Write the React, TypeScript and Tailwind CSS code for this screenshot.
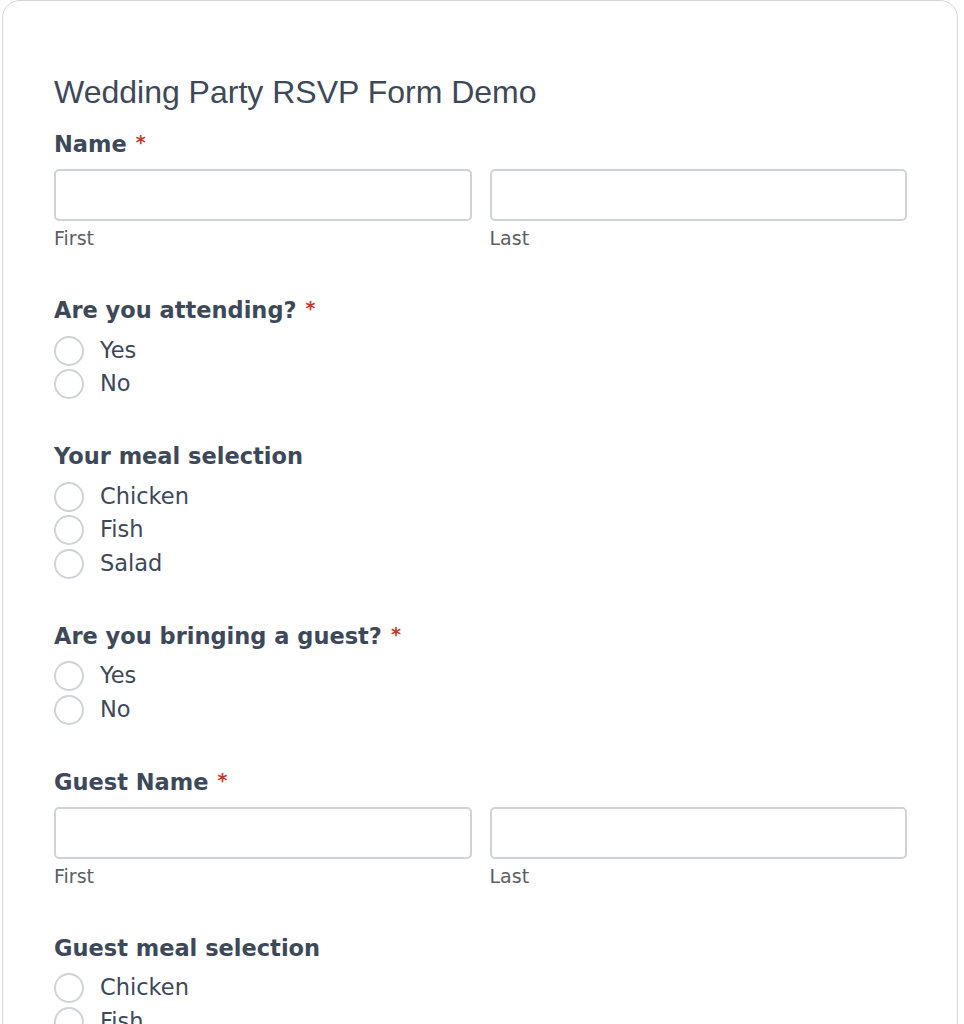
const labelFont = { fontFamily: '"DejaVu Sans", Verdana, sans-serif' };

function Req() {
  return <span className="ml-[9px] text-[19px] leading-[26px] text-[#c0392b]">*</span>;
}

function FieldLabel({ text, required }: { text: string; required?: boolean }) {
  return (
    <div className="flex items-start text-[22.5px] font-bold leading-[30px] text-[#3d4859]">
      <span>{text}</span>
      {required && <Req />}
    </div>
  );
}

function NameField({ label }: { label: string }) {
  return (
    <div className="mb-[45px]">
      <FieldLabel text={label} required />
      <div className="mt-[10px] grid grid-cols-2 gap-[18px]">
        {['First', 'Last'].map((sub) => (
          <div key={sub}>
            <input
              type="text"
              className="block h-[52px] w-full rounded-[5px] border-2 border-[#cfd2d6] bg-white px-3"
            />
            <div className="mt-[5px] text-[19px] leading-[24px] text-[#5a5e66]">{sub}</div>
          </div>
        ))}
      </div>
    </div>
  );
}

function RadioField({ label, options, required }: { label: string; options: string[]; required?: boolean }) {
  return (
    <div className="mb-[40px]">
      <FieldLabel text={label} required={required} />
      <div className="mt-[9px] flex flex-col">
        {options.map((opt) => (
          <label key={opt} className="flex h-[33.5px] items-center">
            <span className="h-[30px] w-[30px] shrink-0 rounded-full border-2 border-[#cfd2d6] bg-white" />
            <span className="ml-[16px] text-[22.5px] text-[#3d4859]">{opt}</span>
          </label>
        ))}
      </div>
    </div>
  );
}

export default function App() {
  return (
    <div className="h-[1024px] overflow-hidden bg-white">
      <div
        className="ml-[2px] w-[956px] rounded-t-[18px] border border-[#d6d6df] bg-white pb-10 pl-[51px] pr-[50px] pt-[70px]"
        style={labelFont}
      >
        <h1
          className="mb-[16px] text-[32px] leading-[42px] text-[#3d4859]"
          style={{ fontFamily: '"Liberation Sans", Arial, sans-serif' }}
        >
          Wedding Party RSVP Form Demo
        </h1>
        <div className="flex flex-col">
          <NameField label="Name" />
          <RadioField label="Are you attending?" options={['Yes', 'No']} required />
          <RadioField label="Your meal selection" options={['Chicken', 'Fish', 'Salad']} />
          <RadioField label="Are you bringing a guest?" options={['Yes', 'No']} required />
          <NameField label="Guest Name" />
          <RadioField label="Guest meal selection" options={['Chicken', 'Fish', 'Salad']} />
        </div>
      </div>
    </div>
  );
}
